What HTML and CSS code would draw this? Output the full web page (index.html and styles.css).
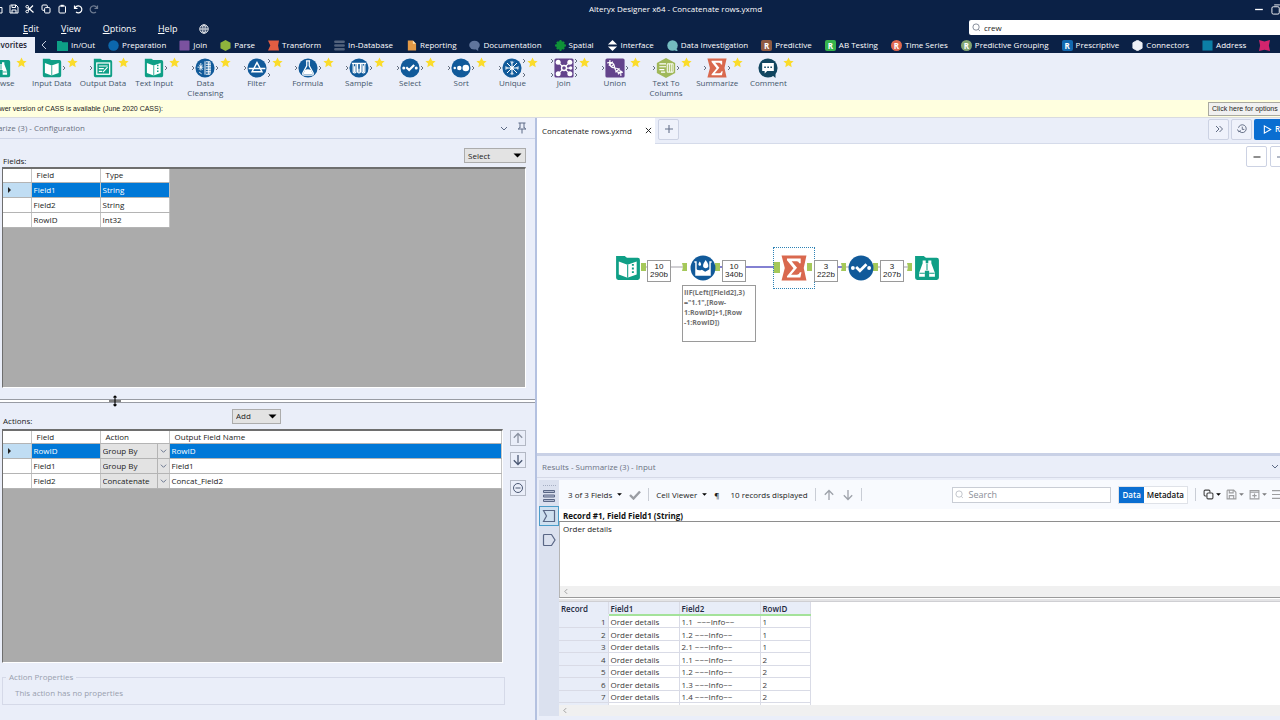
FILE: index.html
```html
<!DOCTYPE html>
<html lang="en">
<head>
<meta charset="utf-8">
<title>Alteryx Designer x64 - Concatenate rows.yxmd</title>
<link rel="stylesheet" href="styles.css">
</head>
<body>
<svg class="defs" aria-hidden="true">
  <symbol id="star" viewBox="0 0 12 12"><path d="M6 .5 7.7 4.1l3.9.4-2.9 2.7.8 3.9L6 9.100 2.500 11.100l.8-3.900L.4 4.500l3.900-.4z" fill="#fbdc2b"/></symbol>
  <symbol id="arr" viewBox="0 0 4 6"><path d="M1 1l2 2-2 2" fill="none" stroke="#555f70" stroke-width=".9"/></symbol>
  <symbol id="down" viewBox="0 0 8 5"><path d="M1 1l3 3 3-3" fill="none" stroke="#5c6a86" stroke-width="1"/></symbol>
  <symbol id="tri" viewBox="0 0 8 5"><path d="M0 .5h8L4 4.500z" fill="#000"/></symbol>
  <symbol id="mag" viewBox="0 0 10 10"><circle cx="4.500" cy="4.500" r="3.500" fill="none" stroke="currentColor" stroke-width=".9"/><path d="M7 7.200l1.800 1.600" stroke="currentColor" stroke-width=".9"/></symbol>
  <symbol id="save" viewBox="0 0 10 10"><path d="M1.500 1h5.500L9 3v6H1V1.500zM3 1v2.500h3.500V1M3 9V6h4v3" fill="none" stroke="currentColor"/></symbol>
  <symbol id="copy" viewBox="0 0 10 10"><path d="M3.300 6.300H2q-1 0-1-1V2q0-1 1-1h3.300q1 0 1 1v1.300" fill="none" stroke="currentColor"/><rect x="3.600" y="3.600" width="5.400" height="5.400" rx="1" fill="none" stroke="currentColor"/></symbol>
  <symbol id="up" viewBox="0 0 12 12"><path d="M6 11V1.500M1.800 5.800L6 1.500l4.200 4.300" fill="none" stroke="currentColor" stroke-width="1.300"/></symbol>
  <symbol id="browse" viewBox="0 0 24 24"><path d="M1 1h8l2 1.500h10a2 2 0 0 1 2 2V21a2 2 0 0 1-2 2H3a2 2 0 0 1-2-2z" fill="#0f9f86"/><path d="M8 5h2.800v2.500h2.400V5H16v2.500l3.300 9V20h-5.300v-5.500h-4V20H4.700v-3.500l3.300-9z" fill="#fff"/><path d="M12 8v6M5 16.800h5M14 16.800h5" stroke="#0f9f86"/></symbol>
  <symbol id="book" viewBox="0 0 24 24"><path d="M1 1h8l2 1.500h10a2 2 0 0 1 2 2V21a2 2 0 0 1-2 2H3a2 2 0 0 1-2-2z" fill="#0f9f86"/><path d="M3.500 6l8 3 8.500-3v12l-8.500 3-8-3z" fill="#fff"/><path d="M11.700 9v12" stroke="#0f9f86"/></symbol>
  <symbol id="bookdots" viewBox="0 0 24 24"><path d="M1 1h8l2 1.500h10a2 2 0 0 1 2 2V21a2 2 0 0 1-2 2H3a2 2 0 0 1-2-2z" fill="#0f9f86"/><path d="M3.500 6l8 3 8.500-3v12l-8.500 3-8-3z" fill="#fff"/><path d="M11.700 9v12" stroke="#0f9f86"/><path d="M16.500 8.200v9.500" stroke="#0f9f86" stroke-width="1.800" stroke-dasharray="1.700 1.700"/></symbol>
  <symbol id="output" viewBox="0 0 24 24"><path d="M1 1h8l2 1.500h10a2 2 0 0 1 2 2V21a2 2 0 0 1-2 2H3a2 2 0 0 1-2-2z" fill="#0f9f86"/><rect x="4.500" y="6" width="15.500" height="13.500" fill="none" stroke="#fff" stroke-width="1.500"/><path d="M7 9.500h10.500M7 12.700h6M7 16h4M17.500 11l-5.500 6" stroke="#fff" stroke-width="1.300"/></symbol>
  <symbol id="cleanse" viewBox="0 0 24 24"><circle cx="12" cy="12" r="11.500" fill="#115a9a"/><path d="M12 4v16M13 4.500h5v15h-5M13 7.500h6M13 10.500h6M13 13.500h6M13 16.500h6M16 4.500v15" fill="none" stroke="#fff" stroke-width="1.100"/><path d="M7 6v9M3 11h7M5 17l3 2M5 8l4 6M9 8l-4 6" stroke="#fff"/></symbol>
  <symbol id="filter" viewBox="0 0 24 24"><circle cx="12" cy="12" r="11.500" fill="#115a9a"/><path d="M12 5.500l6 11H6zM2 12.500h20" fill="none" stroke="#fff" stroke-width="1.700"/></symbol>
  <symbol id="formula" viewBox="0 0 24 24"><circle cx="12" cy="12" r="11.500" fill="#115a9a"/><path d="M9.500 3.500h5M10.500 4v5.500L5.800 18q-.8 2.500 2 2.500h8.400q2.800 0 2-2.500L13.500 9.500V4" fill="none" stroke="#fff" stroke-width="1.500"/><path d="M8.500 14.500q3-2 7 0l2.500 5h-12z" fill="#fff"/></symbol>
  <symbol id="sample" viewBox="0 0 24 24"><circle cx="12" cy="12" r="11.500" fill="#115a9a"/><path d="M3.500 6.500h17" stroke="#fff" stroke-width="1.600"/><path d="M5 7v10q1.700 2 3.400 0V7M10.300 7v10q1.700 2 3.400 0V7M15.600 7v10q1.700 2 3.400 0V7" fill="none" stroke="#fff" stroke-width="1.400"/><path d="M6.700 10v7M12 13v4M17.300 9v8" stroke="#fff" stroke-width="1.300"/></symbol>
  <symbol id="select" viewBox="0 0 24 24"><circle cx="12" cy="12" r="11.500" fill="#115a9a"/><circle cx="4.500" cy="12" r="1.800" fill="#fff"/><circle cx="19.500" cy="12" r="1.800" fill="#fff"/><path d="M7.500 11l3.500 3.500 6-6" fill="none" stroke="#fff" stroke-width="2.600"/></symbol>
  <symbol id="sort" viewBox="0 0 24 24"><circle cx="12" cy="12" r="11.500" fill="#115a9a"/><circle cx="4.500" cy="12" r="1.500" fill="#fff"/><circle cx="10" cy="12" r="2.700" fill="#fff"/><circle cx="17.800" cy="12" r="4" fill="#fff"/></symbol>
  <symbol id="unique" viewBox="0 0 24 24"><circle cx="12" cy="12" r="11.500" fill="#115a9a"/><path d="M12 3.500v17M3.500 12h17M6 6l12 12M18 6L6 18M10 4.500l2 2 2-2M10 19.500l2-2 2 2M4.500 10l2 2-2 2M19.500 10l-2 2 2 2" fill="none" stroke="#fff" stroke-width="1.200"/><circle cx="12" cy="12" r="2" fill="#fff"/></symbol>
  <symbol id="join" viewBox="0 0 24 24"><rect x=".5" y=".5" width="23" height="23" rx="2" fill="#63438c"/><path d="M5 5l14 14M19 5L5 19M12 12h8" stroke="#fff" stroke-width="1.500"/><g fill="#fff"><circle cx="5" cy="5" r="3"/><circle cx="19" cy="5" r="3"/><circle cx="5" cy="19" r="3"/><circle cx="19" cy="19" r="3"/><circle cx="20" cy="12" r="2"/></g><circle cx="12" cy="12" r="3" fill="#63438c" stroke="#fff" stroke-width="1.600"/></symbol>
  <symbol id="union" viewBox="0 0 24 24"><rect x=".5" y=".5" width="23" height="23" rx="2" fill="#63438c"/><path d="M2.500 6q8-3 9 5t10 6M6 2.500q-2 9 6 9.500t7 9.500M4.500 9l5-4.500M7 11l4-4M12.500 17l5-4.500M15.500 19.500l4.500-4" fill="none" stroke="#fff" stroke-width="1.500"/></symbol>
  <symbol id="ttc" viewBox="0 0 24 24"><path d="M12 0l11 6v12l-11 6L1 18V6z" fill="#a0b859"/><path d="M4 7h8M4 10.500h8M4 14h6M6 17h5" stroke="#fff" stroke-width="1.400"/><path d="M13.500 7h7v10h-7zM16 7v10M18.300 7v10" fill="none" stroke="#fff" stroke-width="1.200"/></symbol>
  <symbol id="sum" viewBox="0 0 24 24"><path d="M.5.500h23l-2.500 11.500 2.500 11.500H.5L3.500 12z" fill="#d9684e"/><path d="M5.500 3.200h12.700v4.500h-1.400q-.4-2-2.300-2H9.800l5 6-5.500 6.600h5.500q2 0 2.700-2.300h1.400l-1 4.800H5.500v-1.300l6-7.200-6-7.500z" fill="#fff"/></symbol>
  <symbol id="comment" viewBox="0 0 24 24"><circle cx="12" cy="12" r="11.500" fill="#11455f"/><path d="M14 18l7 6v-7z" fill="#11455f"/><path d="M5 6h14v9.500h-8l-3 3v-3H5z" fill="#fff"/><path d="M7.500 11h9.200" stroke="#11455f" stroke-width="1.700" stroke-dasharray="1.900 1.800"/></symbol>
  <symbol id="multirow" viewBox="0 0 24 24"><circle cx="12" cy="12" r="11.500" fill="#115a9a"/><path d="M4 6.500h1.500V18.500h13V6.500H20" fill="none" stroke="#fff" stroke-width="1.300"/><path d="M5.500 13q3 2 5.500.5l3 2 4.500-2.500v5.500h-13z" fill="#fff"/><path d="M14.500 4.500q-4 5.500-1.500 7.300 1.500.8 3 0 2.500-1.800-1.500-7.300z" fill="#fff"/><path d="M9 6q-2 2.700-.8 3.600.8.500 1.600 0Q11 8.700 9 6z" fill="#fff"/></symbol>
</svg>

<header class="app-header">
  <div class="title-row">
    <div class="quick">
      <button aria-label="Open"><svg viewBox="0 0 10 10"><path d="M1 2h3l1 1.500h4V9H1z" fill="none" stroke="currentColor"/></svg></button>
      <button aria-label="Save"><svg><use href="#save"/></svg></button>
      <button aria-label="Cut"><svg viewBox="0 0 10 10"><path d="M3 6.500L8 1.500M3 3.500l5.500 5" stroke="currentColor" stroke-width="1.200"/><circle cx="2.200" cy="2.700" r="1.300" fill="none" stroke="currentColor"/><circle cx="2.200" cy="7.500" r="1.300" fill="none" stroke="currentColor"/></svg></button>
      <button aria-label="Copy"><svg><use href="#copy"/></svg></button>
      <button aria-label="Paste"><svg viewBox="0 0 10 10"><rect x="2" y="2" width="6.500" height="7" rx="1" fill="none" stroke="currentColor"/><path d="M3.700 1.700h3" stroke="currentColor" stroke-width="1.800"/></svg></button>
      <button aria-label="Undo"><svg viewBox="0 0 10 10"><path d="M1.500 1.500v3h3M2 4.300A3.500 3.500 0 1 1 3 8" fill="none" stroke="currentColor" stroke-width="1.200"/></svg></button>
      <button aria-label="Redo" class="dim"><svg viewBox="0 0 10 10"><path d="M8.500 1.500v3h-3M8 4.300A3.500 3.500 0 1 0 7 8" fill="none" stroke="currentColor" stroke-width="1.200"/></svg></button>
    </div>
    <h1 class="app-title">Alteryx Designer x64 - Concatenate rows.yxmd</h1>
    <div class="win">
      <button aria-label="Minimize"><svg viewBox="0 0 10 10"><path d="M1 5h7" stroke="#fff" stroke-width="1.200"/></svg></button>
      <button aria-label="Restore"><svg viewBox="0 0 12 12"><rect x="1" y="3" width="8" height="8" rx="1.500" fill="none" stroke="#fff"/><path d="M3.500 1h6q2 0 2 2v6" fill="none" stroke="#fff"/></svg></button>
    </div>
  </div>
  <nav class="menu-row">
    <div class="menus">
      <button><u>E</u>dit</button><button><u>V</u>iew</button><button><u>O</u>ptions</button><button><u>H</u>elp</button>
      <button aria-label="Language"><svg class="globe" viewBox="0 0 10 10"><circle cx="5" cy="5" r="4.200" fill="none" stroke="#fff"/><ellipse cx="5" cy="5" rx="2" ry="4.200" fill="none" stroke="#fff" stroke-width=".8"/><path d="M1 5h8M5 1v8" stroke="#fff" stroke-width=".8"/></svg></button>
    </div>
    <label class="global-search"><svg><use href="#mag"/></svg><input type="text" value="crew" aria-label="Search tools"></label>
  </nav>
  <nav class="cats">
    <button class="cat active">Favorites</button>
    <button class="prev" aria-label="Previous"><svg viewBox="0 0 6 10"><path d="M5 1L1 5l4 4" fill="none" stroke="#c4cddd"/></svg></button>
    <button class="cat"><svg viewBox="0 0 12 12"><path d="M0 1h5l1 1.500h6V12H0z" fill="#0d9f86"/></svg>In/Out</button>
    <button class="cat"><svg viewBox="0 0 12 12"><circle cx="6" cy="6" r="5.700" fill="#0c67ac"/></svg>Preparation</button>
    <button class="cat"><svg viewBox="0 0 12 12"><rect x=".5" y=".5" width="11" height="11" rx="1" fill="#7b529f"/></svg>Join</button>
    <button class="cat"><svg viewBox="0 0 12 12"><path d="M6 0l5.500 3v6L6 12 .5 9V3z" fill="#8eb43c"/></svg>Parse</button>
    <button class="cat"><svg viewBox="0 0 12 12"><path d="M0 .5h12L11 6l1 5.500H0L2.500 6z" fill="#e25d42"/></svg>Transform</button>
    <button class="cat"><svg viewBox="0 0 12 12"><path d="M1.500 2h9M1.500 6h9M1.500 10h9" stroke="#53627c" stroke-width="2.800" stroke-linecap="round"/></svg>In-Database</button>
    <button class="cat"><svg viewBox="0 0 12 12"><path d="M2 .5h5.500L11 4v7.500H2z" fill="#e49a46"/><path d="M7.500.5V4H11" fill="#fbe0b4"/></svg>Reporting</button>
    <button class="cat"><svg viewBox="0 0 12 12"><ellipse cx="6" cy="5.500" rx="5.800" ry="4.800" fill="#60759c"/><path d="M6 9l4 3V8z" fill="#60759c"/></svg>Documentation</button>
    <button class="cat"><svg viewBox="0 0 12 12"><circle cx="6" cy="6" r="4.800" fill="#0f9238"/><path d="M6 0v12M0 6h12M2 2l8 8M10 2l-8 8" stroke="#0f9238" stroke-width="2"/></svg>Spatial</button>
    <button class="cat"><svg viewBox="0 0 12 12"><path d="M6 0l5 5H1zM6 12l5-5H1z" fill="#fff"/></svg>Interface</button>
    <button class="cat"><svg viewBox="0 0 12 12"><circle cx="6" cy="6" r="5.700" fill="#74bcc0"/><path d="M8 9l3 3" stroke="#74bcc0" stroke-width="2"/></svg>Data Investigation</button>
    <button class="cat"><span class="r brown">R</span>Predictive</button>
    <button class="cat"><span class="r green">R</span>AB Testing</button>
    <button class="cat"><span class="r coral">R</span>Time Series</button>
    <button class="cat"><span class="r sage">R</span>Predictive Grouping</button>
    <button class="cat"><span class="r blue">R</span>Prescriptive</button>
    <button class="cat"><svg viewBox="0 0 12 12"><path d="M6 .3l5 2.700v6L6 11.700 1 9V3z" fill="#eef1f6" stroke="#eef1f6"/></svg>Connectors</button>
    <button class="cat"><svg viewBox="0 0 12 12"><rect x=".5" y=".5" width="11" height="11" fill="#0c7fa6"/></svg>Address</button>
    <button class="cat" aria-label="Demographic Analysis"><svg viewBox="0 0 12 12"><path d="M0 0l6 1.500L12 0l-1.200 6L12 12l-6-1.500L0 12l1.200-6z" fill="#d3246d"/></svg></button>
  </nav>
</header>

<section class="ribbon">
  <button class="tool"><span class="ico"><svg class="main"><use href="#browse"/></svg><svg class="star"><use href="#star"/></svg></span>Browse</button>
  <button class="tool"><span class="ico"><svg class="main"><use href="#book"/></svg><svg class="out"><use href="#arr"/></svg><svg class="star"><use href="#star"/></svg></span>Input Data</button>
  <button class="tool"><span class="ico"><svg class="in"><use href="#arr"/></svg><svg class="main"><use href="#output"/></svg><svg class="star"><use href="#star"/></svg></span>Output Data</button>
  <button class="tool"><span class="ico"><svg class="main"><use href="#bookdots"/></svg><svg class="out"><use href="#arr"/></svg><svg class="star"><use href="#star"/></svg></span>Text Input</button>
  <button class="tool"><span class="ico"><svg class="in"><use href="#arr"/></svg><svg class="main"><use href="#cleanse"/></svg><svg class="out"><use href="#arr"/></svg><svg class="star"><use href="#star"/></svg></span>Data<br>Cleansing</button>
  <button class="tool"><span class="ico"><svg class="in"><use href="#arr"/></svg><svg class="main"><use href="#filter"/></svg><svg class="out hi"><use href="#arr"/></svg><svg class="out lo"><use href="#arr"/></svg><svg class="star"><use href="#star"/></svg></span>Filter</button>
  <button class="tool"><span class="ico"><svg class="in"><use href="#arr"/></svg><svg class="main"><use href="#formula"/></svg><svg class="out"><use href="#arr"/></svg><svg class="star"><use href="#star"/></svg></span>Formula</button>
  <button class="tool"><span class="ico"><svg class="in"><use href="#arr"/></svg><svg class="main"><use href="#sample"/></svg><svg class="out"><use href="#arr"/></svg><svg class="star"><use href="#star"/></svg></span>Sample</button>
  <button class="tool"><span class="ico"><svg class="in"><use href="#arr"/></svg><svg class="main"><use href="#select"/></svg><svg class="out"><use href="#arr"/></svg><svg class="star"><use href="#star"/></svg></span>Select</button>
  <button class="tool"><span class="ico"><svg class="in"><use href="#arr"/></svg><svg class="main"><use href="#sort"/></svg><svg class="out"><use href="#arr"/></svg><svg class="star"><use href="#star"/></svg></span>Sort</button>
  <button class="tool"><span class="ico"><svg class="in"><use href="#arr"/></svg><svg class="main"><use href="#unique"/></svg><svg class="out hi"><use href="#arr"/></svg><svg class="out lo"><use href="#arr"/></svg><svg class="star"><use href="#star"/></svg></span>Unique</button>
  <button class="tool"><span class="ico"><svg class="in hi"><use href="#arr"/></svg><svg class="in lo"><use href="#arr"/></svg><svg class="main"><use href="#join"/></svg><svg class="out hi"><use href="#arr"/></svg><svg class="out"><use href="#arr"/></svg><svg class="out lo"><use href="#arr"/></svg><svg class="star"><use href="#star"/></svg></span>Join</button>
  <button class="tool"><span class="ico"><svg class="in"><use href="#arr"/></svg><svg class="main"><use href="#union"/></svg><svg class="out"><use href="#arr"/></svg><svg class="star"><use href="#star"/></svg></span>Union</button>
  <button class="tool"><span class="ico"><svg class="in"><use href="#arr"/></svg><svg class="main"><use href="#ttc"/></svg><svg class="out"><use href="#arr"/></svg><svg class="star"><use href="#star"/></svg></span>Text To<br>Columns</button>
  <button class="tool"><span class="ico"><svg class="in"><use href="#arr"/></svg><svg class="main"><use href="#sum"/></svg><svg class="out"><use href="#arr"/></svg><svg class="star"><use href="#star"/></svg></span>Summarize</button>
  <button class="tool"><span class="ico"><svg class="main"><use href="#comment"/></svg><svg class="star"><use href="#star"/></svg></span>Comment</button>
</section>

<section class="notice">
  <p class="notice-text">A newer version of CASS is available (June 2020 CASS):</p>
  <button class="notice-btn">Click here for options</button>
</section>

<main class="work">
  <section class="config">
    <header class="panel-head">
      <h2 class="panel-title">Summarize (3) - Configuration</h2>
      <button class="plain" aria-label="Panel menu"><svg class="chev"><use href="#down"/></svg></button>
      <button class="plain" aria-label="Pin"><svg class="pin" viewBox="0 0 10 12"><path d="M1.500 1h7M3 1v5M7 1v5M1 7h8M5 7v4.500M3 5.500L1.200 7M7 5.500L8.800 7" fill="none" stroke="#5c6a86"/></svg></button>
    </header>
    <div class="bar fields-bar">
      <span class="lbl">Fields:</span>
      <label class="combo wide"><select aria-label="Select"><option>Select</option></select><svg><use href="#tri"/></svg></label>
    </div>
    <div class="grid-box fields-box">
      <table class="grid short">
        <thead><tr><th class="c0"></th><th class="c1">Field</th><th class="c1">Type</th></tr></thead>
        <tbody>
          <tr class="sel"><td class="mark"></td><td>Field1</td><td>String</td></tr>
          <tr><td></td><td>Field2</td><td>String</td></tr>
          <tr><td></td><td>RowID</td><td>Int32</td></tr>
        </tbody>
      </table>
    </div>
    <div class="splitter"><svg class="resize" viewBox="0 0 12 12"><path d="M6 1v10M0 6h12M4.500 2.500L6 1l1.500 1.500M4.500 9.500L6 11l1.500-1.500" fill="none" stroke="#000" stroke-width="1.100"/></svg></div>
    <div class="bar actions-bar">
      <span class="lbl">Actions:</span>
      <label class="combo add"><select aria-label="Add"><option>Add</option></select><svg><use href="#tri"/></svg></label>
    </div>
    <div class="actions-row">
      <div class="grid-box actions-box">
        <table class="grid full">
          <thead><tr><th class="c0"></th><th class="c1">Field</th><th class="c1">Action</th><th>Output Field Name</th></tr></thead>
          <tbody>
            <tr class="sel"><td class="mark"></td><td>RowID</td><td class="pick"><label class="cell-combo"><select aria-label="Action 1"><option>Group By</option></select><svg><use href="#down"/></svg></label></td><td>RowID</td></tr>
            <tr><td></td><td>Field1</td><td class="pick"><label class="cell-combo"><select aria-label="Action 2"><option>Group By</option></select><svg><use href="#down"/></svg></label></td><td>Field1</td></tr>
            <tr><td></td><td>Field2</td><td class="pick"><label class="cell-combo"><select aria-label="Action 3"><option>Concatenate</option></select><svg><use href="#down"/></svg></label></td><td>Concat_Field2</td></tr>
          </tbody>
        </table>
      </div>
      <div class="side-btns">
        <button class="sq" aria-label="Move up"><svg class="grey"><use href="#up"/></svg></button>
        <button class="sq" aria-label="Move down"><svg class="flip"><use href="#up"/></svg></button>
        <button class="sq last" aria-label="Remove"><svg viewBox="0 0 12 12"><circle cx="6" cy="6" r="4.500" fill="none" stroke="currentColor"/><path d="M3.500 6h5" stroke="currentColor"/></svg></button>
      </div>
    </div>
    <fieldset class="props"><legend>Action Properties</legend><p>This action has no properties</p></fieldset>
  </section>

  <section class="right">
    <div class="doc-bar">
      <div class="doc-tab"><span>Concatenate rows.yxmd</span><button class="plain" aria-label="Close tab"><svg viewBox="0 0 8 8"><path d="M1 1l6 6M7 1L1 7" stroke="#222" stroke-width="1.100"/></svg></button></div>
      <button class="tb-btn" aria-label="New tab"><svg viewBox="0 0 10 10"><path d="M5 1v8M1 5h8" stroke="#66728c" stroke-width="1.100"/></svg></button>
      <span class="grow"></span>
      <button class="tb-btn" aria-label="More"><svg viewBox="0 0 10 10"><path d="M2 2l3 3-3 3M5.500 2l3 3-3 3" fill="none" stroke="#4f5b75" stroke-width=".9"/></svg></button>
      <button class="tb-btn" aria-label="Schedule"><svg viewBox="0 0 12 12"><path d="M2.300 8A4.700 4.700 0 1 0 1.800 4.500M6.300 3.200V6.500h2.500M.5 6.500l1.500 2.800L4.800 8" fill="none" stroke="#4f5b75"/></svg></button>
      <button class="run"><svg viewBox="0 0 10 10"><path d="M1.500 1l7 4-7 4z" fill="none" stroke="#fff" stroke-width="1.200"/></svg>Run</button>
    </div>
    <div class="canvas">
      <div class="zoom"><button class="tb-btn" aria-label="Zoom out"><svg viewBox="0 0 10 10"><path d="M1.500 5h7" stroke="#444" stroke-width="1.200"/></svg></button><button class="tb-btn" aria-label="Zoom in"><svg viewBox="0 0 10 10"><path d="M1 5h8M5 1v8" stroke="#66728c"/></svg></button></div>
      <svg class="wires" viewBox="0 0 400 40">
        <g stroke="#a3a0a8" fill="none"><path d="M105 17h44M309 17h64"/></g>
        <path d="M182 17h58M278 17h28" stroke="#5b58c4" stroke-width="1.300"/>
        <g fill="#a5c85a"><path d="M104 13h5v8h-5zM178 13h5v8h-5zM270 13h5v8h-5zM336 13h5v8h-5z"/><path d="M145 13h5v8h-5l1-4zM236 12h7v11h-7l1-5zM304 13h5v8h-5l1-4zM370 13h5v8h-5l1-4z"/></g>
      </svg>
      <svg class="node n1"><use href="#bookdots"/></svg>
      <svg class="node n2"><use href="#multirow"/></svg>
      <div class="node-sel"><svg><use href="#sum"/></svg></div>
      <svg class="node n4"><use href="#select"/></svg>
      <svg class="node n5"><use href="#browse"/></svg>
      <div class="count k1">10<br>290b</div>
      <div class="count k2">10<br>340b</div>
      <div class="count k3">3<br>222b</div>
      <div class="count k4">3<br>207b</div>
      <div class="note">IIF(Left([Field2],3)<br>="1.1",[Row-<br>1:RowID]+1,[Row<br>-1:RowID])</div>
    </div>
    <section class="results">
      <header class="res-head"><h2 class="panel-title">Results - Summarize (3) - Input</h2><button class="plain" aria-label="Results menu"><svg class="chev"><use href="#down"/></svg></button></header>
      <div class="res-body">
        <div class="rail">
          <span class="grip"></span>
          <button aria-label="Messages"><svg viewBox="0 0 14 14"><path d="M1.500 1.500h11v2h-11zM1.500 6h11v2h-11zM1.500 10.500h11v2h-11z" fill="#b4bdd2" stroke="#5a6786"/></svg></button>
          <button class="on" aria-label="Input anchor"><svg viewBox="0 0 14 14"><path d="M1.500 1.500h11v11h-11L4.500 7z" fill="none" stroke="#5a6786" stroke-width="1.200"/></svg></button>
          <button class="third" aria-label="Output anchor"><svg viewBox="0 0 14 14"><path d="M2.500 1.500h7L13 7l-3.500 5.500h-7q-1 0-1-1v-9q0-1 1-1z" fill="none" stroke="#5a6786" stroke-width="1.200"/></svg></button>
        </div>
        <div class="res-main">
          <div class="res-tools">
            <button class="txt">3 of 3 Fields<svg class="tiny"><use href="#tri"/></svg></button>
            <button class="txt" aria-label="Apply"><svg class="check" viewBox="0 0 12 10"><path d="M1 5l3.500 3.500L11 1.500" fill="none" stroke="#9a9da3" stroke-width="2.400"/></svg></button>
            <i class="sep"></i>
            <button class="txt">Cell Viewer<svg class="tiny"><use href="#tri"/></svg></button>
            <button class="txt pil">¶</button>
            <span class="txt">10 records displayed</span>
            <i class="sep"></i>
            <button class="txt" aria-label="Previous record"><svg class="nav"><use href="#up"/></svg></button>
            <button class="txt" aria-label="Next record"><svg class="nav flip"><use href="#up"/></svg></button>
            <i class="sep"></i>
            <span class="grow"></span>
            <label class="res-search"><svg><use href="#mag"/></svg><input type="text" placeholder="Search" aria-label="Search results"></label>
            <div class="seg"><button class="cur">Data</button><button>Metadata</button></div>
            <i class="sep"></i>
            <div class="acts">
              <button aria-label="Copy"><svg class="a1"><use href="#copy"/></svg><svg class="tiny"><use href="#tri"/></svg></button>
              <button class="off" aria-label="Save"><svg class="a1"><use href="#save"/></svg><svg class="tiny"><use href="#tri"/></svg></button>
              <button class="off" aria-label="New"><svg class="a1" viewBox="0 0 10 10"><path d="M1 1.500h8V9H1zM1 3h8M5 4v4M3 6h4" fill="none" stroke="currentColor"/></svg><svg class="tiny"><use href="#tri"/></svg></button>
              <button class="off" aria-label="Options"><svg class="a1" viewBox="0 0 10 10"><path d="M0 1.500h10M0 5h10M0 8.500h10" stroke="currentColor"/></svg></button>
            </div>
          </div>
          <h3 class="rec">Record #1, Field Field1 (String)</h3>
          <div class="cell-view"><p>Order details</p><div class="hscroll"><svg viewBox="0 0 5 8"><path d="M4 1L1 4l3 3" fill="none" stroke="#8d8d8d"/></svg></div></div>
          <div class="hsplit"></div>
          <div class="data">
            <table>
              <thead><tr><th class="d0">Record</th><th class="d1">Field1</th><th class="d2">Field2</th><th class="d3">RowID</th></tr></thead>
              <tbody>
                <tr><th>1</th><td>Order details</td><td>1.1&nbsp; ~~~Info~~</td><td>1</td></tr>
                <tr><th>2</th><td>Order details</td><td>1.2 ~~~Info~~</td><td>1</td></tr>
                <tr><th>3</th><td>Order details</td><td>2.1 ~~~Info~~</td><td>1</td></tr>
                <tr><th>4</th><td>Order details</td><td>1.1 ~~~Info~~</td><td>2</td></tr>
                <tr><th>5</th><td>Order details</td><td>1.2 ~~~Info~~</td><td>2</td></tr>
                <tr><th>6</th><td>Order details</td><td>1.3 ~~~Info~~</td><td>2</td></tr>
                <tr><th>7</th><td>Order details</td><td>1.4 ~~~Info~~</td><td>2</td></tr>
                <tr><th></th><td></td><td></td><td></td></tr>
              </tbody>
            </table>
          </div>
          <div class="hscroll"><svg viewBox="0 0 5 8"><path d="M4 1L1 4l3 3" fill="none" stroke="#8d8d8d"/></svg></div>
        </div>
      </div>
    </section>
  </section>
</main>
</body>
</html>
```
FILE: styles.css
```css
* { box-sizing: border-box; }
html, body { height: 100%; margin: 0; }
body {
  display: flex;
  flex-direction: column;
  overflow: hidden;
  background: #eaeef9;
  color: #222;
  font: 8px/12px "Open Sans", sans-serif;
}
button, input, select { font: inherit; color: inherit; margin: 0; padding: 0; border: 0; background: none; border-radius: 0; }
h1, h2, h3, p { margin: 0; font: inherit; }
svg { display: block; flex: none; }
.defs { position: absolute; width: 0; height: 0; }
.grow { flex: 1; }
.plain { display: flex; }

/* Header */
.app-header { flex: none; background: #0b2146; color: #fff; overflow: hidden; }
.title-row { display: grid; grid-template-columns: 1fr auto 1fr; align-items: center; height: 18px; }
.quick { display: flex; gap: 6px; margin-left: -7px; }
.quick svg { width: 10px; height: 10px; }
.quick .dim { opacity: .4; }
.app-title { padding-left: 71px; }
.win { display: flex; justify-content: flex-end; gap: 6px; margin-right: -2px; }
.win svg { width: 11px; height: 11px; }
.menu-row { display: flex; justify-content: space-between; height: 19px; }
.menus { display: flex; align-items: center; gap: 22px; padding-left: 23px; padding-top: 2px; font-size: 9px; }
.globe { width: 10px; height: 10px; }
.global-search { display: flex; align-items: center; gap: 3px; width: 316px; height: 15px; margin-top: 2px; padding-left: 3px; margin-right: -5px; background: #fff; color: #222; border-radius: 2px; }
.global-search svg { width: 9px; height: 9px; color: #6d7686; }
.global-search input { flex: 1; outline: 0; }
.cats { display: flex; height: 16px; white-space: nowrap; }
.cat { display: flex; align-items: center; flex: none; gap: 3px; margin-right: 13px; }
.cat svg { width: 11px; height: 11px; }
.cat.active { justify-content: flex-end; width: 35px; margin: 0; padding-right: 8px; background: #eaeef9; color: #1a2130; font-weight: 600; }
.prev { display: flex; flex: none; align-items: center; width: 22px; padding-left: 6px; }
.prev svg { width: 6px; height: 10px; }
.r { width: 11px; height: 11px; border-radius: 2px; font-weight: 700; line-height: 11px; text-align: center; }
.brown { background: #8f5a41; }
.green { background: #36b34c; }
.coral { background: #e0694f; border-radius: 50%; }
.sage { background: #84a672; border-radius: 50%; }
.blue { background: #1269b0; }

/* Tool ribbon */
.ribbon { flex: none; display: grid; grid-template-columns: repeat(16, 4vw); height: 47px; margin-left: -25px; padding-top: 5px; }
.tool { display: flex; flex-direction: column; align-items: center; color: #44566b; line-height: 10px; }
.ico { position: relative; width: 20px; height: 20px; }
.ico .main { width: 20px; height: 20px; }
.ico .star { position: absolute; left: 25px; top: -1px; width: 11px; height: 11px; }
.in, .out { position: absolute; top: 7px; width: 4px; height: 6px; }
.in { left: -4px; }
.out { left: 20px; }
.hi { top: 0; }
.lo { top: 14px; }

/* Update notice */
.notice { flex: none; display: flex; justify-content: space-between; align-items: center; height: 18px; overflow: hidden; background: #ffffdf; border-bottom: 1px solid #d9dbe0; font: 7px/12px "Liberation Sans", sans-serif; white-space: nowrap; }
.notice-text { display: flex; justify-content: flex-end; width: 163px; }
.notice-btn { width: 80px; height: 14px; margin-right: -8px; padding-left: 3px; background: #f0f0f0; border: 1px solid #a9a9a0; text-align: left; }

/* Workspace */
.work { flex: 1; min-height: 0; display: grid; grid-template-columns: 537fr 743fr; }
.config { display: flex; flex-direction: column; min-width: 0; overflow: hidden; border-right: 2px solid #b4c1e0; }
.panel-head { display: flex; align-items: center; gap: 9px; height: 21px; padding-right: 8px; border-bottom: 1px solid #cdd4e6; overflow: hidden; }
.panel-title { color: #6a7283; white-space: nowrap; }
.panel-head .panel-title { display: flex; justify-content: flex-end; width: 85px; margin-right: auto; }
.chev { width: 8px; height: 5px; }
.pin { width: 10px; height: 12px; }
.bar { display: flex; flex: none; justify-content: space-between; align-items: flex-end; }
.fields-bar { height: 28px; padding: 0 9px 0 3px; }
.lbl { line-height: 13px; }
.combo { display: flex; align-items: center; height: 15px; margin-bottom: 4px; background: #e3e3e3; border: 1px solid #acacac; }
.combo select, .cell-combo select { appearance: none; flex: 1; min-width: 0; outline: 0; }
.combo select { padding-left: 3px; }
.combo svg { width: 9px; height: 5px; margin-right: 3px; pointer-events: none; }
.wide { width: 62px; }
.add { width: 49px; margin-bottom: 5px; }
.grid-box { min-height: 0; background: #ababab; border: 1px solid #fff; border-top: 2px solid #6e6e6e; border-left: 1px solid #6e6e6e; }
.fields-box { flex: 221 1 0; margin: 0 9px 0 2px; }
.grid { border-collapse: collapse; table-layout: fixed; background: #fff; }
.short { width: 166px; }
.full { width: 100%; }
.grid .c0 { width: 28px; }
.grid .c1 { width: 69px; }
.grid th, .grid td { height: 15px; padding: 0 0 0 2px; border-right: 1px solid #c4c4c4; border-bottom: 1px solid #b4b4b4; font-weight: 400; text-align: left; line-height: 14px; }
.grid th { height: 13px; padding-left: 5px; line-height: 12px; }
.sel td { background: #0078d7; color: #fff; }
.grid .mark { background: #c0ddf3; }
.mark::before { content: ""; display: block; margin-left: 3px; width: 0; border: 3px solid transparent; border-left-color: #222; border-right: 0; }
.grid .pick { padding: 0; }
.pick, .sel .pick { background: #e3e3e3; color: #222; }
.cell-combo { display: flex; align-items: center; height: 14px; }
.cell-combo select { padding-left: 2px; }
.cell-combo svg { width: 12px; height: 14px; padding: 4px 2px; border-left: 1px solid #b4b4b4; pointer-events: none; }
.splitter { position: relative; flex: none; height: 4px; margin-top: 11px; border-top: 1px solid #989ba3; border-bottom: 1px solid #989ba3; background: #fff; }
.resize { position: absolute; left: 109px; top: -5px; width: 12px; height: 12px; }
.actions-bar { height: 26px; padding: 0 254px 0 3px; }
.actions-bar .lbl { margin-bottom: 2px; }
.actions-row { flex: 238 1 0; min-height: 0; display: flex; gap: 7px; padding: 0 9px 0 2px; }
.actions-box { flex: 1; }
.side-btns { display: flex; flex-direction: column; gap: 6px; padding-top: 1px; }
.sq { display: grid; place-items: center; width: 16px; height: 16px; border: 1px solid #b3b8c4; color: #4b5873; }
.sq svg { width: 12px; height: 12px; }
.sq .grey { color: #8b92a1; }
.last { margin-top: 6px; }
.flip { rotate: 180deg; }
.props { min-height: 34px; margin: 8px 30px 15px 2px; padding: 4px 12px 0; border: 1px solid #d5d9e8; color: #989eae; }
.props legend { padding: 0 3px; margin-left: -9px; }

/* Document area */
.right { display: flex; flex-direction: column; min-width: 0; overflow: hidden; }
.doc-bar { flex: none; display: flex; align-items: center; gap: 2px; height: 26px; margin-right: -26px; border-bottom: 1px solid #d5dbea; }
.doc-tab { display: flex; align-items: center; justify-content: space-between; width: 118px; height: 26px; margin-right: 1px; padding: 0 3px 0 5px; background: #fff; }
.doc-tab svg { width: 7px; height: 7px; }
.tb-btn { display: grid; place-items: center; width: 21px; height: 21px; margin-bottom: 3px; border: 1px solid #ccd2e3; border-radius: 2px; background: #eff2fb; }
.tb-btn svg { width: 10px; height: 10px; }
.run { display: flex; align-items: center; gap: 3px; width: 52px; height: 21px; margin-bottom: 3px; padding-left: 9px; background: #0a6ed1; color: #fff; font-weight: 600; border-radius: 2px 0 0 2px; }
.run svg { width: 9px; height: 9px; }
.canvas { position: relative; flex: 1; min-height: 0; background: #fff; overflow: hidden; }
.zoom { display: flex; justify-content: flex-end; gap: 3px; margin: 2px -11px 0 0; }
.zoom .tb-btn { background: #fff; }
.wires { position: absolute; left: 0; top: 106px; width: 400px; height: 40px; }
.node { position: absolute; top: 111px; width: 26px; height: 26px; }
.n1 { left: 78px; } .n2 { left: 153px; } .n4 { left: 311px; } .n5 { left: 377px; }
.node-sel { position: absolute; left: 236px; top: 103px; width: 42px; height: 42px; padding: 7px; border: 1px dotted #2d82b5; }
.node-sel svg { width: 26px; height: 26px; }
.count { position: absolute; top: 116px; width: 24px; height: 22px; border: 1px solid #9a9a9a; background: #fff; font: 8px/8px "Liberation Sans", sans-serif; text-align: center; padding-top: 2px; }
.k1 { left: 110px; } .k2 { left: 185px; } .k3 { left: 277px; } .k4 { left: 343px; }
.note { position: absolute; left: 145px; top: 141px; width: 74px; height: 57px; padding: 2px 1px; border: 1px solid #9a9a9a; background: #fff; color: #707070; font-weight: 700; font-size: 7px; line-height: 10px; white-space: nowrap; }

/* Results */
.results { flex: none; display: flex; flex-direction: column; height: 267px; border-top: 3px solid #c9d1e6; }
.res-head { flex: none; display: flex; align-items: center; justify-content: space-between; height: 22px; padding: 0 1px 0 5px; border-bottom: 1px solid #d5d9e7; }
.res-body { flex: 1; min-height: 0; display: flex; padding: 2px 0 4px 2px; }
.rail { flex: none; display: flex; flex-direction: column; align-items: center; width: 20px; background: #dbe1ef; }
.rail button { display: grid; place-items: center; width: 20px; height: 20px; border: 1px solid transparent; }
.rail svg { width: 14px; height: 14px; }
.rail .on { border-color: #4a9cc9; background: #cfe0f0; }
.rail .third { margin-top: 4px; }
.grip { width: 13px; height: 6px; border-bottom: 1px dotted #a5aec2; }
.res-main { flex: 1; min-width: 0; display: flex; flex-direction: column; background: #fff; }
.res-tools { flex: none; display: flex; align-items: center; gap: 7px; height: 29px; margin-right: -3px; padding-left: 9px; background: #f8fafe; overflow: hidden; white-space: nowrap; }
.txt { display: flex; align-items: center; gap: 5px; }
.pil { margin-right: 4px; }
.tiny { width: 5px; height: 3px; }
.check { width: 12px; height: 10px; }
.nav { width: 12px; height: 12px; color: #9da1a9; }
.sep { width: 1px; height: 13px; background: #c9cdd5; }
.res-search { display: flex; align-items: center; gap: 4px; width: 159px; height: 16px; padding-left: 2px; background: #fff; border: 1px solid #c9cdd5; }
.res-search svg { width: 9px; height: 9px; color: #b5b9c1; }
.res-search input { flex: 1; min-width: 0; outline: 0; font-size: 9px; }
.res-search input::placeholder { color: #8b8f97; }
.seg { display: flex; border: 1px solid #dfe2e8; background: #fff; color: #111; font-weight: 600; }
.seg button { height: 16px; padding: 0 3px; }
.seg .cur { background: #0a6ed1; color: #fff; }
.acts { display: flex; gap: 5px; }
.acts button { display: flex; align-items: center; gap: 2px; color: #444; }
.a1 { width: 11px; height: 11px; }
.acts .off { opacity: .5; }
.rec { padding: 0 4px; height: 13px; font-weight: 700; line-height: 13px; color: #111; border-bottom: 1px solid #8e8e8e; }
.cell-view { flex: none; display: flex; flex-direction: column; justify-content: space-between; height: 76px; padding-top: 1px; border-left: 1px solid #b5b5b5; border-bottom: 1px solid #9a9a9a; }
.cell-view p { padding: 0 3px; }
.hscroll { flex: none; display: flex; align-items: center; height: 11px; padding-left: 4px; background: #f0f0f0; }
.hscroll svg { width: 4px; height: 7px; }
.hsplit { flex: none; height: 4px; background: #e4e4e6; border-top: 1px solid #fff; border-bottom: 1px solid #cfcfd3; }
.data { flex: 1; min-height: 0; overflow: hidden; }
.data table { border-collapse: collapse; table-layout: fixed; width: 251px; color: #3a3a3a; }
.data td, .data th { height: 12px; padding: 0 2px; border-right: 1px solid #d9dbe6; border-bottom: 1px solid #d9dbe6; line-height: 11px; text-align: left; font-weight: 400; }
.data tbody tr:nth-child(even) td { height: 13px; }
.data thead th { background: #e8edf8; color: #1d2940; font-weight: 600; height: 13px; border-bottom: 2px solid #a4e29a; }
.data thead .d0 { border-bottom-color: #e8edf8; }
.data tbody th { background: #e8edf8; text-align: right; }
.d0 { width: 49px; } .d1 { width: 71px; } .d2 { width: 81px; } .d3 { width: 50px; }
```
